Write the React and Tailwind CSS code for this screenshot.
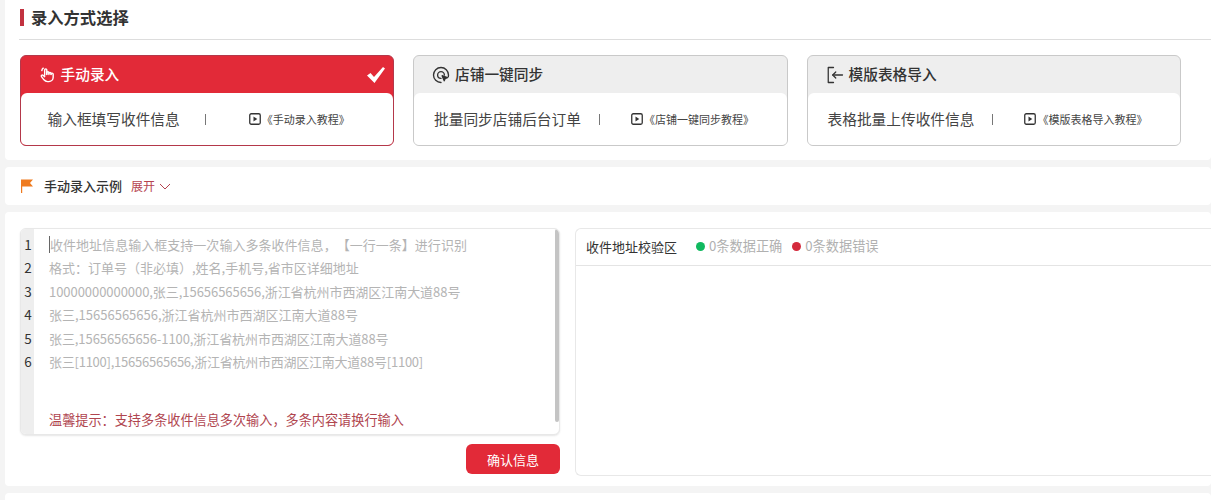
const FONT = { fontFamily: '"Noto Sans CJK SC", "Liberation Sans", sans-serif' };

function HandIcon() {
  return (
    <svg width="17" height="17" viewBox="0 0 24 24" fill="none" stroke="currentColor" strokeWidth="2" strokeLinecap="round" strokeLinejoin="round">
      <path d="M8 13V5.5a1.5 1.5 0 0 1 3 0V12" />
      <path d="M11 11.5v-2a1.5 1.5 0 0 1 3 0V12" />
      <path d="M14 10.5a1.5 1.5 0 0 1 3 0V12" />
      <path d="M17 11.5a1.5 1.5 0 0 1 3 0V16a6 6 0 0 1-6 6h-2a7 7 0 0 1-5-2.5L3.5 15a1.5 1.5 0 0 1 2.2-2L8 15" />
      <path d="M4 6.5 A5 5 0 0 1 6 3" />
    </svg>
  );
}

function SyncIcon() {
  return (
    <svg width="18" height="18" viewBox="0 0 24 24" fill="none" stroke="currentColor" strokeWidth="1.8" strokeLinecap="round" strokeLinejoin="round">
      <path d="M12 22a10 10 0 1 1 10-10c0 1-.1 1.6-.3 2.4" />
      <path d="M16.5 12a4.5 4.5 0 1 0-4.5 4.5" />
      <path d="M13.5 13l7 2.6-3 1.2-1.2 3z" fill="currentColor" />
    </svg>
  );
}

function ImportIcon() {
  return (
    <svg width="18" height="18" viewBox="0 0 24 24" fill="none" stroke="currentColor" strokeWidth="1.7" strokeLinecap="round" strokeLinejoin="round">
      <path d="M10 2H3v20h7" />
      <path d="M22 12H9" />
      <path d="M13 8l-4 4 4 4" />
    </svg>
  );
}

function PlayIcon() {
  return (
    <svg width="12" height="12" viewBox="0 0 12 12" className="shrink-0">
      <rect x="0.75" y="0.75" width="10.5" height="10.5" rx="1.5" fill="none" stroke="#333" strokeWidth="1.3" />
      <path d="M4.5 3.5 8.3 6 4.5 8.5z" fill="#333" />
    </svg>
  );
}

function MethodCard({ active, icon, title, desc, tutorial, descPad, sepGap, linkGap }) {
  return (
    <div className={`w-[374.5px] h-[91px] rounded-md border overflow-hidden flex flex-col ${active ? "border-[#b4384a] bg-[#e22a38]" : "border-[#c9c9c9] bg-[#eeeeee]"}`}>
      <div className={`h-[37px] shrink-0 flex items-center justify-between pl-[18px] pr-[7px] ${active ? "text-white" : "text-[#333333]"}`}>
        <div className="flex items-center gap-[5px]">
          {icon}
          <span className="text-[14.7px] font-medium leading-none">{title}</span>
        </div>
        {active && (
          <svg width="20" height="18" viewBox="0 0 20 18">
            <path d="M1 9.5 4.5 7 8 11 17 1l2 1.5L8.5 17z" fill="#fff" />
          </svg>
        )}
      </div>
      <div className={`flex-1 bg-white rounded-t-md flex items-center ${descPad}`}>
        <span className="text-[14.7px] text-[#444444] leading-none whitespace-nowrap">{desc}</span>
        <span className={`w-px h-[11px] bg-[#777777] ${sepGap}`} />
        <div className={`flex items-center gap-[1px] ${linkGap}`}>
          <PlayIcon />
          <span className="text-[11px] text-[#444444] leading-none whitespace-nowrap [text-spacing-trim:space-all]">{tutorial}</span>
        </div>
      </div>
    </div>
  );
}

const LINES = [
  ["收件地址信息输入框支持一次输入多条收件信息，【一行一条】进行识别", "tracking-[0.03px]"],
  ["格式：订单号（非必填）,姓名,手机号,省市区详细地址", ""],
  ["10000000000000,张三,15656565656,浙江省杭州市西湖区江南大道88号", "tracking-[-0.05px]"],
  ["张三,15656565656,浙江省杭州市西湖区江南大道88号", ""],
  ["张三,15656565656-1100,浙江省杭州市西湖区江南大道88号", "tracking-[-0.08px]"],
  ["张三[1100],15656565656,浙江省杭州市西湖区江南大道88号[1100]", "tracking-[-0.24px]"],
];

export default function App() {
  return (
    <div className="w-[1211px] h-[500px] overflow-hidden bg-[#f4f4f4] pl-[5px] flex flex-col gap-[7px]" style={FONT}>
      {/* Method section */}
      <section className="h-[160px] shrink-0 bg-white rounded-b pl-[14px]">
        <div className="h-[40px] border-b border-[#dddddd] flex items-center pb-[4px]">
          <span className="w-[4px] h-[17px] bg-[#c23240] ml-px" />
          <h2 className="ml-[7px] text-[16.3px] font-bold text-[#333333] leading-none">录入方式选择</h2>
        </div>
        <div className="mt-[15px] flex gap-[19px] pl-[0.5px]">
          <MethodCard active icon={<HandIcon />} title="手动录入" desc="输入框填写收件信息" tutorial="《手动录入教程》" descPad="pl-[27px]" sepGap="ml-[25px]" linkGap="ml-[43px]" />
          <MethodCard icon={<SyncIcon />} title="店铺一键同步" desc="批量同步店铺后台订单" tutorial="《店铺一键同步教程》" descPad="pl-[20px]" sepGap="ml-[18px]" linkGap="ml-[31px]" />
          <MethodCard icon={<ImportIcon />} title="模版表格导入" desc="表格批量上传收件信息" tutorial="《模版表格导入教程》" descPad="pl-[20px]" sepGap="ml-[18px]" linkGap="ml-[31px]" />
        </div>
      </section>

      {/* Example row */}
      <section className="h-[38px] shrink-0 bg-white rounded flex items-center pl-[15px]">
        <svg width="14" height="14" viewBox="0 0 14 14" className="shrink-0">
          <path d="M1 0.5h12l-3 3.5 3 3.5H2.2V14H1z" fill="#ef7a1e" />
        </svg>
        <span className="ml-[10px] text-[13px] font-medium text-[#333333] leading-none pb-px">手动录入示例</span>
        <span className="ml-[9px] text-[12px] text-[#b5434f] leading-none pb-px">展开</span>
        <svg width="12" height="7" viewBox="0 0 12 7" className="ml-[4px]" fill="none" stroke="#b5434f" strokeWidth="1">
          <path d="M1 1l5 5 5-5" />
        </svg>
      </section>

      {/* Editor section */}
      <section className="h-[274px] shrink-0 bg-white rounded flex pl-[15px] pt-[16px] gap-[15px]">
        <div className="w-[540px] shrink-0 flex flex-col">
          <div className="h-[207px] flex rounded-md border border-[#e8e8e8] shadow-[0_1px_2px_rgba(0,0,0,0.1)] overflow-hidden bg-white">
            <div className="w-[13px] shrink-0 bg-[#eeeeee] pt-[4px]">
              {LINES.map((_, i) => (
                <div key={i} className="h-[23.4px] leading-[23.4px] text-[13.5px] text-[#333333] text-center pl-[1px]">{i + 1}</div>
              ))}
            </div>
            <div className="flex-1 flex flex-col pl-[15px] pt-[4px] pb-[8px]">
              {LINES.map(([line, track], i) => (
                <div key={i} className={`h-[23.4px] leading-[23.4px] text-[13px] text-[#b4b4b4] whitespace-nowrap [text-spacing-trim:space-all] ${track} ${i === 0 ? "border-l border-[#666666] [border-image:linear-gradient(transparent_15%,#666666_15%,#666666_85%,transparent_85%)_1]" : ""}`}>
                  {line}
                </div>
              ))}
              <div className="mt-auto text-[13.15px] text-[#b0454f] leading-none whitespace-nowrap [text-spacing-trim:space-all]">温馨提示：支持多条收件信息多次输入，多条内容请换行输入</div>
            </div>
            <div className="w-[4px] h-[193px] shrink-0 bg-[#c4c4c4] rounded-sm" />
          </div>
          <div className="mt-[9px] flex justify-end">
            <button className="w-[94px] h-[30px] rounded-md bg-[#e22a38] text-white text-[13px] leading-none">确认信息</button>
          </div>
        </div>

        <div className="w-[641px] h-[248px] shrink-0 rounded-l-md border border-r-0 border-[#e8e8e8]">
          <div className="h-[37px] border-b border-[#e4e4e4] flex items-center pl-[10px] pb-[2px]">
            <span className="text-[13px] text-[#333333] leading-none">收件地址校验区</span>
            <span className="ml-[19px] w-[9px] h-[9px] rounded-full bg-[#10b95f]" />
            <span className="ml-[4px] text-[13.2px] text-[#b0b0b0] leading-none">0条数据正确</span>
            <span className="ml-[10px] w-[9px] h-[9px] rounded-full bg-[#d42a3c]" />
            <span className="ml-[4px] text-[13.2px] text-[#b0b0b0] leading-none">0条数据错误</span>
          </div>
        </div>
      </section>

      <section className="flex-1 bg-white rounded-t" />
    </div>
  );
}
